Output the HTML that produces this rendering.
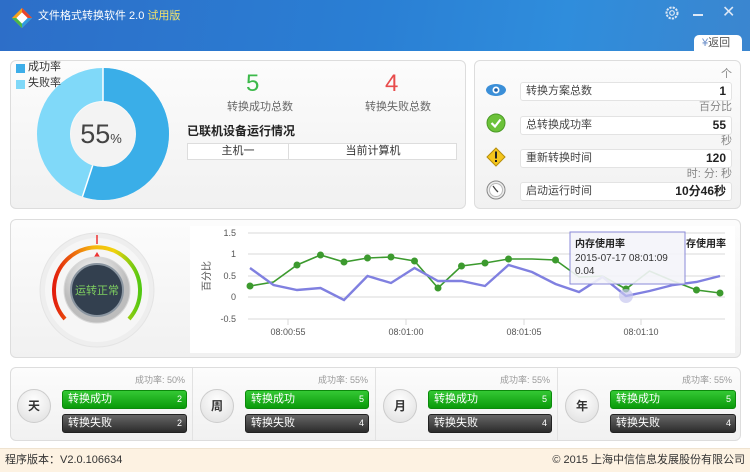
<!DOCTYPE html>
<html><head><meta charset="utf-8"><style>
*{margin:0;padding:0;box-sizing:border-box}
body{width:750px;height:472px;overflow:hidden;background:#fff;font-family:"Liberation Sans","Noto Sans CJK SC",sans-serif;font-size:12px;color:#333;position:relative;line-height:1.2}
.abs{position:absolute}
.hdr{left:0;top:0;width:750px;height:51px;background:linear-gradient(100deg,#2d6ec8 0%,#2a7fd4 50%,#2f8ddc 75%,#3b86cf 100%)}
.panel{position:absolute;border:1px solid #ddd;border-radius:6px;background:linear-gradient(#fcfcfc,#f1f1f1)}
.row{position:absolute;width:212px;height:19px;border:1px solid #e3e3e3;border-radius:3px;background:#fff;font-size:11px;color:#444;padding:0 0 0 5px;line-height:17px}
.row b{position:absolute;right:5px;top:0;font-size:12px;color:#222}
.unit{position:absolute;right:18px;font-size:11px;color:#888}
.bar{position:absolute;height:19px;border-radius:3px;color:#fff;font-size:11px;padding:0 0 0 5px;line-height:17px}
.bar span{position:absolute;right:4px;top:0;font-size:9px}
.g{background:linear-gradient(#34c834,#0a9a0a);border:1px solid #0b8a0b}
.d{background:linear-gradient(#666,#2c2c2c);border:1px solid #222}
.badge{position:absolute;width:34px;height:34px;border-radius:50%;background:radial-gradient(circle at 50% 35%,#fff,#ddd);border:1px solid #ccc;text-align:center;line-height:32px;font-weight:bold;font-size:12px;color:#333}
.rate{position:absolute;font-size:9px;color:#999}
</style></head><body>
<div class="abs hdr"></div>
<svg class="abs" style="left:11px;top:7px" width="22" height="22" viewBox="0 0 22 22"><path d="M11 1 L21 11 L11 21 L1 11Z" fill="#f6a21d"/><path d="M11 1 L21 11 L11 11Z" fill="#e8452c"/><path d="M1 11 L11 21 L11 11Z" fill="#4ab848"/><path d="M11 11 L21 11 L11 21Z" fill="#2f9be0"/><rect x="7" y="7" width="8" height="8" fill="#fff" transform="rotate(45 11 11)"/></svg>
<div class="abs" style="left:38px;top:10px;color:#fff;font-size:11px">文件格式转换软件 2.0 <span style="color:#f4e36a">试用版</span></div>
<svg class="abs" style="left:664px;top:5px" width="16" height="16" viewBox="0 0 16 16"><circle cx="8" cy="8" r="5.5" fill="none" stroke="#dde8f6" stroke-width="2" stroke-dasharray="2.2 1.1"/><circle cx="8" cy="8" r="2.3" fill="none" stroke="#dde8f6" stroke-width="1.2"/></svg>
<div class="abs" style="left:693px;top:14px;width:10px;height:1.5px;background:#dde8f6"></div>
<div class="abs" style="left:722px;top:3px;color:#dde8f6;font-size:16px">✕</div>
<div class="abs" style="left:694px;top:35px;width:48px;height:16px;background:#fff;border-radius:5px 5px 0 0;font-size:11px;padding:1px 0 0 8px;line-height:14px"><span style="color:#6a8ec8">¥</span><span style="color:#555">返回</span></div>

<div class="panel" style="left:10px;top:60px;width:456px;height:149px"></div>
<svg class="abs" style="left:37px;top:68px" width="132" height="132" viewBox="-66 -66 132 132">
<circle r="49.5" fill="none" stroke="#80d9f9" stroke-width="33"/>
<circle r="49.5" fill="none" stroke="#3aaee8" stroke-width="33" stroke-dasharray="171 400" transform="rotate(-90)"/>
<line x1="0" y1="-33" x2="0" y2="-66" stroke="#fff" stroke-width="1.5"/>
<line x1="-10.3" y1="31.4" x2="-20.6" y2="62.8" stroke="#fff" stroke-width="1.5"/>
<circle r="32" fill="#f3f3f3"/>
<text x="-2" y="9" text-anchor="middle" font-family="Liberation Sans" font-size="27" fill="#444">55<tspan font-size="13">%</tspan></text>
</svg>
<div class="abs" style="left:16px;top:64px;width:9px;height:9px;background:#3daee9"></div>
<div class="abs" style="left:28px;top:61px;font-size:11px">成功率</div>
<div class="abs" style="left:16px;top:80px;width:9px;height:9px;background:#7fd8f8"></div>
<div class="abs" style="left:28px;top:77px;font-size:11px">失败率</div>
<div class="abs" style="left:246px;top:70px;font-size:24px;color:#3cb94a">5</div>
<div class="abs" style="left:227px;top:101px;font-size:11px;color:#666">转换成功总数</div>
<div class="abs" style="left:385px;top:70px;font-size:24px;color:#e84c4c">4</div>
<div class="abs" style="left:365px;top:101px;font-size:11px;color:#666">转换失败总数</div>
<div class="abs" style="left:187px;top:124px;font-size:12px;font-weight:bold;color:#222">已联机设备运行情况</div>
<div class="abs" style="left:187px;top:143px;width:270px;height:17px;border:1px solid #ddd;background:#fff;font-size:11px">
<div class="abs" style="left:0;top:0;width:101px;height:15px;border-right:1px solid #ddd;text-align:center;line-height:15px">主机一</div>
<div class="abs" style="left:101px;top:0;width:168px;height:15px;text-align:center;line-height:15px">当前计算机</div></div>

<div class="panel" style="left:474px;top:60px;width:267px;height:149px"></div>
<div class="unit" style="top:68px">个</div>
<div class="row" style="left:520px;top:82px">转换方案总数<b>1</b></div>
<div class="unit" style="top:101px">百分比</div>
<div class="row" style="left:520px;top:116px">总转换成功率<b>55</b></div>
<div class="unit" style="top:135px">秒</div>
<div class="row" style="left:520px;top:149px">重新转换时间<b>120</b></div>
<div class="unit" style="top:168px">时: 分: 秒</div>
<div class="row" style="left:520px;top:182px">启动运行时间<b>10分46秒</b></div>
<svg class="abs" style="left:485px;top:82px" width="22" height="120" viewBox="0 0 22 120">
<ellipse cx="11" cy="8" rx="10" ry="6" fill="#3b8fd8"/><circle cx="11" cy="8" r="3.5" fill="#fff"/><circle cx="11" cy="8" r="1.8" fill="#1d5fa8"/>
<circle cx="11" cy="41" r="9" fill="#6cc23a" stroke="#4a9a25"/><path d="M6.5 41 L10 44.5 L15.5 37.5" stroke="#fff" stroke-width="2.2" fill="none"/>
<path d="M11 66 L20 75 L11 84 L2 75Z" fill="#f4c51c" stroke="#b68e0b"/><rect x="10" y="69.5" width="2" height="7" fill="#222"/><rect x="10" y="78" width="2" height="2" fill="#222"/>
<circle cx="11" cy="108" r="9" fill="#ececec" stroke="#888"/><circle cx="11" cy="108" r="6.5" fill="#fff" stroke="#bbb"/><path d="M11 108 L8 104 M11 108 L13 110" stroke="#444" stroke-width="1.3"/>
</svg>

<div class="panel" style="left:10px;top:219px;width:731px;height:139px"></div>
<svg class="abs" style="left:37px;top:230px" width="120" height="120" viewBox="-60 -60 120 120">
<circle r="57" fill="#eeeeee" stroke="#e4e4e4"/>
<circle r="52" fill="#f6f6f6"/>
<defs><linearGradient id="ag" x1="0" y1="0" x2="1" y2="0"><stop offset="0" stop-color="#e21c0c"/><stop offset="0.45" stop-color="#f5b50e"/><stop offset="0.7" stop-color="#f1d20e"/><stop offset="1" stop-color="#52c812"/></linearGradient>
<radialGradient id="kn" cx="0.45" cy="0.3"><stop offset="0" stop-color="#fff"/><stop offset="1" stop-color="#bdbdbd"/></radialGradient></defs>
<path d="M-32 29 A43 43 0 1 1 32 29" fill="none" stroke="url(#ag)" stroke-width="4"/>
<line x1="0" y1="-55" x2="0" y2="-46" stroke="#e33" stroke-width="1.5"/>
<path d="M-3 -33 L3 -33 L0 -38Z" fill="#e33"/>
<circle r="33" fill="url(#kn)" stroke="#d8d8d8"/>
<circle r="26" fill="#33404f" stroke="#8a95a0" stroke-width="2"/>
<text y="4" text-anchor="middle" font-family="Noto Sans CJK SC" font-size="11" fill="#7fcf60">运转正常</text>
</svg>
<svg class="abs" style="left:190px;top:226px" width="545" height="127" viewBox="190 226 545 127">
<rect x="190" y="226" width="545" height="127" fill="#fff"/>
<g stroke="#d8d8d8" stroke-width="1"><line x1="248" y1="233" x2="725" y2="233"/><line x1="248" y1="254" x2="725" y2="254"/><line x1="248" y1="276" x2="725" y2="276"/><line x1="248" y1="297" x2="725" y2="297"/><line x1="248" y1="319" x2="725" y2="319"/>
<line x1="288" y1="319" x2="288" y2="325"/><line x1="406" y1="319" x2="406" y2="325"/><line x1="524" y1="319" x2="524" y2="325"/><line x1="641" y1="319" x2="641" y2="325"/></g>
<g font-family="Liberation Sans" font-size="9" fill="#555" text-anchor="end"><text x="236" y="236">1.5</text><text x="236" y="257">1</text><text x="236" y="279">0.5</text><text x="236" y="300">0</text><text x="236" y="322">-0.5</text></g>
<g font-family="Liberation Sans" font-size="9" fill="#555" text-anchor="middle"><text x="288" y="335">08:00:55</text><text x="406" y="335">08:01:00</text><text x="524" y="335">08:01:05</text><text x="641" y="335">08:01:10</text></g>
<text transform="translate(210,276) rotate(-90)" text-anchor="middle" font-family="Noto Sans CJK SC" font-size="10" fill="#555">百分比</text>
<polyline fill="none" stroke="#3c9a2e" stroke-width="1.6" points="250,286 273.5,282 297,265 320.5,255 344,262 367.5,258 391,257 414.5,261 438,288 461.5,266 485,263 508.5,259 532,259 555.5,260 579,277 602.5,276 626,289 649.5,271 673,281 696.5,290 720,293"/>
<g fill="#3c9a2e"><circle cx="250" cy="286" r="3.5"/><circle cx="297" cy="265" r="3.5"/><circle cx="320.5" cy="255" r="3.5"/><circle cx="344" cy="262" r="3.5"/><circle cx="367.5" cy="258" r="3.5"/><circle cx="391" cy="257" r="3.5"/><circle cx="414.5" cy="261" r="3.5"/><circle cx="438" cy="288" r="3.5"/><circle cx="461.5" cy="266" r="3.5"/><circle cx="485" cy="263" r="3.5"/><circle cx="508.5" cy="259" r="3.5"/><circle cx="555.5" cy="260" r="3.5"/><circle cx="626" cy="289" r="3.5"/><circle cx="696.5" cy="290" r="3.5"/><circle cx="720" cy="293" r="3.5"/></g>
<polyline fill="none" stroke="#8080e0" stroke-width="2.4" points="250,268 273.5,285 297,290 320.5,288 344,300 367.5,276 391,283 414.5,268 438,281 461.5,281 485,286 508.5,265 532,272 555.5,284 579,292 602.5,277 626,296 649.5,291 673,285 696.5,282 720,276"/>
<circle cx="626" cy="296" r="7" fill="#c8c8f0" opacity="0.7"/>
<rect x="570" y="232" width="115" height="52" fill="#f4f4fa" fill-opacity="0.9" stroke="#8a8ad8"/>
<text x="575" y="247" font-family="Noto Sans CJK SC" font-size="10" font-weight="bold" fill="#222">内存使用率</text>
<text x="575" y="261" font-family="Liberation Sans" font-size="10" fill="#333">2015-07-17 08:01:09</text>
<text x="575" y="274" font-family="Liberation Sans" font-size="10" fill="#333">0.04</text>
<text x="686" y="247" font-family="Noto Sans CJK SC" font-size="10" font-weight="bold" fill="#222">存使用率</text>
</svg>

<div class="panel" style="left:10px;top:367px;width:731px;height:74px"></div>
<div class="abs" style="left:192px;top:368px;width:1px;height:72px;background:#e2e2e2"></div>
<div class="abs" style="left:375px;top:368px;width:1px;height:72px;background:#e2e2e2"></div>
<div class="abs" style="left:557px;top:368px;width:1px;height:72px;background:#e2e2e2"></div>

<div class="rate" style="left:135px;top:375px">成功率: 50%</div>
<div class="badge" style="left:17px;top:389px">天</div>
<div class="bar g" style="left:62px;top:390px;width:125px">转换成功<span>2</span></div>
<div class="bar d" style="left:62px;top:414px;width:125px">转换失败<span>2</span></div>

<div class="rate" style="left:318px;top:375px">成功率: 55%</div>
<div class="badge" style="left:200px;top:389px">周</div>
<div class="bar g" style="left:245px;top:390px;width:124px">转换成功<span>5</span></div>
<div class="bar d" style="left:245px;top:414px;width:124px">转换失败<span>4</span></div>

<div class="rate" style="left:500px;top:375px">成功率: 55%</div>
<div class="badge" style="left:383px;top:389px">月</div>
<div class="bar g" style="left:428px;top:390px;width:124px">转换成功<span>5</span></div>
<div class="bar d" style="left:428px;top:414px;width:124px">转换失败<span>4</span></div>

<div class="rate" style="left:682px;top:375px">成功率: 55%</div>
<div class="badge" style="left:565px;top:389px">年</div>
<div class="bar g" style="left:610px;top:390px;width:126px">转换成功<span>5</span></div>
<div class="bar d" style="left:610px;top:414px;width:126px">转换失败<span>4</span></div>

<div class="abs" style="left:0;top:448px;width:750px;height:24px;background:#fdf2e2;border-top:1px solid #efe3d0"></div>
<div class="abs" style="left:5px;top:454px;font-size:11px;color:#333">程序版本：V2.0.106634</div>
<div class="abs" style="right:5px;top:454px;font-size:11px;color:#333">© 2015 上海中信信息发展股份有限公司</div>
</body></html>
